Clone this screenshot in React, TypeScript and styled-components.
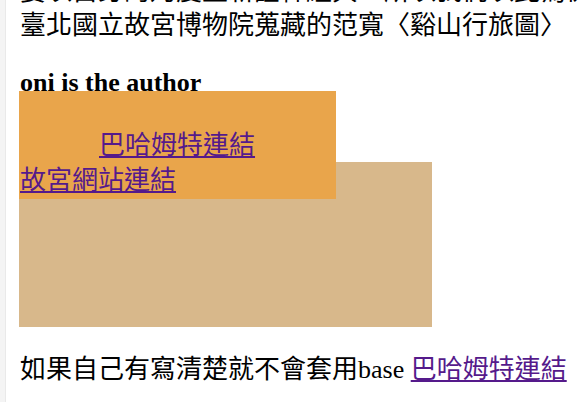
import styled, { createGlobalStyle } from "styled-components";

const GlobalStyle = createGlobalStyle`
  html, body {
    margin: 0;
    padding: 0;
    background: #ffffff;
    overflow: hidden;
  }
  body {
    font-family: "Liberation Serif", "Noto Sans CJK TC", serif;
    font-size: 26px;
    color: #000000;
  }
`;

export default function App() {
  return (
    <>
      <GlobalStyle />
      <Page>
        <Content>
          <Intro>
            <IntroLine>要以自身的角度重新詮釋經典，所以我們以此為例，例如收藏在</IntroLine>
            <IntroLine>臺北國立故宮博物院蒐藏的范寬〈谿山行旅圖〉</IntroLine>
          </Intro>
          <Author>oni is the author</Author>
          <Stage>
            <TanBox />
            <OrangeBox>
              <LinkText href="#" $indent={80}>
                巴哈姆特連結
              </LinkText>
              <LinkText href="#" $indent={1}>
                故宮網站連結
              </LinkText>
            </OrangeBox>
          </Stage>
          <Footer>
            如果自己有寫清楚就不會套用base <LinkText href="#" $inline>巴哈姆特連結</LinkText>
          </Footer>
        </Content>
      </Page>
    </>
  );
}

const Page = styled.div`
  display: flex;
  min-height: 100vh;
  border-left: 5px solid #f4f4f4;
  box-shadow: inset 1px 0 0 #e9e9e9;
`;

const Content = styled.div`
  display: flex;
  flex-direction: column;
  padding-left: 14px;
  flex: 1;
`;

const Intro = styled.p`
  margin: -25px 0 0 0;
  line-height: 34px;
`;

const IntroLine = styled.span`
  display: block;
  white-space: nowrap;
  padding-left: 1px;
`;

const Author = styled.h4`
  margin: 23px 0 0 0;
  font-size: 26px;
  font-weight: bold;
  line-height: 34px;
  padding-left: 1px;
`;

const Stage = styled.div`
  position: relative;
  margin-top: 62px;
`;

const TanBox = styled.div`
  width: 413px;
  height: 165px;
  background: #d8b88b;
`;

const OrangeBox = styled.div`
  position: absolute;
  top: -71px;
  left: 0;
  width: 317px;
  height: 108px;
  box-sizing: border-box;
  padding-top: 38px;
  display: flex;
  flex-direction: column;
  gap: 1px;
  background: #e9a54b;
`;

const LinkText = styled.a<{ $indent?: number; $inline?: boolean }>`
  color: #551a8b;
  text-decoration: underline;
  line-height: 34px;
  white-space: nowrap;
  display: ${(p) => (p.$inline ? "inline" : "block")};
  align-self: flex-start;
  margin-left: ${(p) => (p.$indent ? `${p.$indent}px` : "0")};
`;

const Footer = styled.p`
  margin: 26px 0 0 0;
  line-height: 34px;
  white-space: nowrap;
  padding-left: 1px;
`;
